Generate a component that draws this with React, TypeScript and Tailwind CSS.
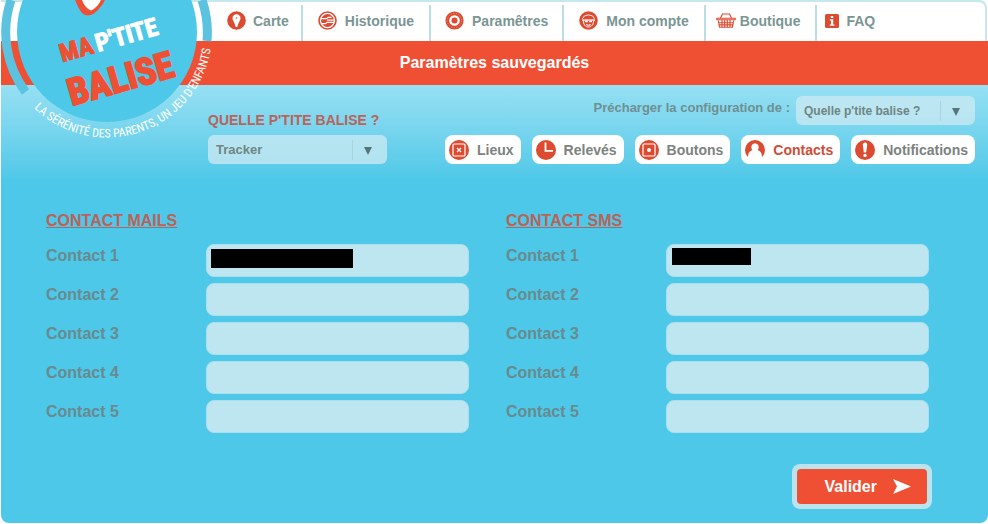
import { useState } from 'react'

const NAV_ITEMS = [
    {key:"Carte", icon:"pin", box:"pl-[15px] pr-3 gap-[7px]"},
    {key:"Historique", icon:"history", box:"px-[15px] gap-2"},
    {key:"Paramêtres", icon:"gear", box:"px-[14px] gap-2"},
    {key:"Mon compte", icon:"face", box:"px-[15px] gap-2"},
    {key:"Boutique", icon:"basket", box:"pl-[10px] pr-[15px] gap-1"},
    {key:"FAQ", icon:"info", box:"pl-2 pr-[15px] gap-[7px]"},
]
const TABS = [
    {key:"Lieux", icon:"place"},
    {key:"Relevés", icon:"clock"},
    {key:"Boutons", icon:"button"},
    {key:"Contacts", icon:"person"},
    {key:"Notifications", icon:"alert"},
]
const ROWS = [1,2,3,4,5]

const Icon = ({name}:any)=>{
    const red = "#dc4a30"
    if (name == "pin") return (
        <svg className="w-[19px] h-[19px]" viewBox="0 0 19 19">
            <circle cx="9.5" cy="9.5" r="9.3" fill={red} />
            <path d="M9.5 3.3c-2.3 0-4 1.7-4 3.9 0 2.2 1.9 3.3 3.2 8.8h1.6c1.3-5.5 3.2-6.6 3.2-8.8 0-2.2-1.7-3.9-4-3.9z" fill="#fff" />
            <circle cx="9.5" cy="7" r=".8" fill={red} />
        </svg>
    )
    if (name == "history") return (
        <svg className="w-[19px] h-[19px]" viewBox="0 0 19 19" fill="none">
            <circle cx="9.5" cy="9.5" r="8.5" stroke={red} strokeWidth="1.6" />
            <circle cx="9.5" cy="9.5" r="6.4" fill={red} />
            <path d="M3 7.6h5.5L10 6.4h3.5M3 12.6h4.5l1.5-1.2h7M9 9.2h7" stroke="#fff" strokeWidth="1.2" />
        </svg>
    )
    if (name == "gear") return (
        <svg className="w-[19px] h-[19px]" viewBox="0 0 19 19" fill="none">
            <circle cx="9.5" cy="9.5" r="7.2" stroke={red} strokeWidth="3.8" />
            <circle cx="9.5" cy="9.5" r="7.2" stroke="#f08a74" strokeWidth="1" strokeDasharray="1.2 1.5" />
            <circle cx="9.5" cy="9.5" r="3" fill={red} />
        </svg>
    )
    if (name == "face") return (
        <svg className="w-[19px] h-[19px]" viewBox="0 0 19 19" fill="none">
            <circle cx="9.5" cy="9.5" r="9.3" fill={red} />
            <path d="M3.4 7.8a6.3 5.2 0 0 1 12.2 0" stroke="#fff" strokeWidth=".9" />
            <path d="M3 9h13" stroke="#fff" strokeWidth="1.2" />
            <path d="M4.2 9c.3 4.8 2.3 7 5.3 7s5-2.2 5.3-7" stroke="#fff" strokeWidth="1" />
            <path d="M5.6 9.5h3.2v1.8H6.2zM10.200 9.500h3.200l-.6 1.800h-2.600z" fill="#fff" />
            <path d="M7.2 13.6q2.300 1.200 4.600 0" stroke="#fff" strokeWidth="1.1" />
        </svg>
    )
    if (name == "basket") return (
        <svg className="w-5 h-[15px]" viewBox="0 0 20 15" fill="none" stroke={red}>
            <path d="M4.5 5l2-4h7l2 4" strokeWidth="1.2" />
            <path d="M.8 5.2h18.4v1.6H.8z" strokeWidth="1.1" />
            <path d="M2.3 7.5l1.2 6.700h13l1.200-6.700M2.700 9.700h14.600M3 11.900h14M6 7v7M8.700 7v7M11.300 7v7M14 7v7" strokeWidth="1.1" />
        </svg>
    )
    if (name == "info") return (
        <svg className="w-[14px] h-[14px]" viewBox="0 0 14 14">
            <rect width="14" height="14" rx="1.5" fill={red} />
            <path d="M5.8 2h2.4v2H5.8zM4.8 5.2h3.4v5.3h1.2v1.3H4.8v-1.3H6v-4H4.8z" fill="#fff" />
        </svg>
    )
    if (name == "clock") return (
        <svg className="w-5 h-5" viewBox="0 0 20 20" fill="none">
            <circle cx="10" cy="10" r="10" fill={red} />
            <path d="M9.5 2.5v8.3H17" stroke="#fff" strokeWidth="1.8" />
        </svg>
    )
    if (name == "person") return (
        <svg className="w-5 h-5" viewBox="0 0 20 20">
            <circle cx="10" cy="10" r="10" fill={red} />
            <path d="M10 3.3a3.9 3.9 0 0 1 2.6 6.7c2.9.9 4.3 3 4.3 6v4H3.1v-4c0-3 1.4-5.1 4.3-6A3.9 3.9 0 0 1 10 3.3z" fill="#fff" />
        </svg>
    )
    if (name == "alert") return (
        <svg className="w-5 h-5" viewBox="0 0 20 20">
            <circle cx="10" cy="10" r="10" fill={red} />
            <path d="M7.8 4.5a2.2 2 0 0 1 4.4 0l-1 8H8.8z" fill="#fff" />
            <circle cx="10" cy="15.4" r="1.7" fill="#fff" />
        </svg>
    )
    return (
        <svg className="w-5 h-5" viewBox="0 0 20 20" fill="none">
            <circle cx="10" cy="10" r="10" fill={red} />
            <rect x="4" y="4" width="12" height="12" rx="1" stroke="#fff" strokeWidth="1.2" />
            {name == "place"
                ? <path d="M8 8l4 4M12 8l-4 4" stroke="#fff" strokeWidth="1.2" />
                : <circle cx="10" cy="10" r="2" fill="#fff" />
            }
        </svg>
    )
}

const Logo = ()=>(
    <svg className="absolute top-0 left-0 w-[216px] h-[142px]" viewBox="0 0 216 142" role="img" aria-label="Ma p'tite balise">
        <circle cx="107" cy="32" r="90" fill="#4dc8e8" />
        <path d="M25.5 92A100.5 100.5 0 0 1 11 0" fill="none" stroke="#5bc3e0" strokeWidth="9" />
        <path d="M202 0A100.5 100.5 0 0 1 207 41" fill="none" stroke="#5bc3e0" strokeWidth="9" />
        <path d="M75 0Q79 10 83 14Q88 17 94 13.5Q101 8 105 0z" fill="#ef5034" />
        <path d="M82 0Q85 8 91 10.5Q98 7 101 0z" fill="#fff" />
        <g fontFamily='"Roboto Condensed", "Liberation Sans Narrow", "DejaVu Sans Condensed", sans-serif' fontWeight="700" strokeLinejoin="round">
            <g transform="rotate(-16 63 61)" fontSize="25" strokeWidth="1">
                <text x="62" y="62" fill="#ef5034" stroke="#ef5034">MA</text>
                <text x="99" y="62" fill="#fff" stroke="#fff">P'TITE</text>
            </g>
            <text transform="rotate(-16 75 106)" x="72" y="105" fontSize="37" fill="#ef5034" stroke="#ef5034" strokeWidth="2">BALISE</text>
        </g>
        <path id="motto" d="M34 108A105 105 0 0 0 212 32" fill="none" />
        <text fontSize="12" fill="#fff" fontFamily='"Roboto Condensed", "Liberation Sans Narrow", "Liberation Sans", sans-serif'>
            <textPath href="#motto">LA SÉRÉNITÉ DES PARENTS, UN JEU D'ENFANTS</textPath>
        </text>
    </svg>
)

const BaliseSelect = ({id, options, textSize}:any)=>(
    <div className="relative w-[179px]">
        <select id={id} className={"block w-full h-[29px] appearance-none rounded-md bg-[#c8e8f2]/80 pl-2 pr-9 font-bold text-[#6f8583] " + textSize}>
            {options.map((x)=><option key={x}>{x}</option>)}
        </select>
        <span className="pointer-events-none absolute right-[34px] top-[5px] h-5 border-l border-[#a9d5e2]"></span>
        <svg className="pointer-events-none absolute right-[15px] top-3 w-2 h-2" viewBox="0 0 8 8"><path d="M0 0h8L4 8z" fill="#57767c" /></svg>
    </div>
)

const ContactList = ({title, name, type, hidden}:any)=>(
    <section className="flex-1">
        <h2 className="mb-[11px] text-base leading-6 font-bold text-[#ba6359] underline">{title}</h2>
        <div className="flex flex-col gap-[6px]">
            {ROWS.map((n)=>(
                <div key={n} className="flex">
                    <label htmlFor={name + n} className="w-40 shrink-0 text-base leading-6 font-bold text-[#698a8e]">Contact {n}</label>
                    <div className="relative flex-1">
                        <input id={name + n} type={type} className="block w-full h-[33px] rounded-lg border border-[#a9dfee] bg-[#bee6f1] px-2" />
                        {n == 1 && <span className={"absolute bg-black " + hidden}></span>}
                    </div>
                </div>
            ))}
        </div>
    </section>
)

const App = ()=>{
    const [tab, s__tab] = useState("Contacts")

    return (
    <div className="relative bg-white pl-px font-['Liberation_Sans',Arial,sans-serif]">
        <nav className="mr-px flex h-[41px] rounded-tr-lg border-t-2 border-r-2 border-[#c5e7ee] pl-[211px] pt-[3px]">
            {NAV_ITEMS.map((x,index)=>(
                <a key={x.key} href="#" className={"flex items-center pb-[5px] text-sm font-bold text-[#7b9593] " + x.box + (index > 0 ? " border-l-2 border-[#b9dee6]" : "")}>
                    <Icon name={x.icon} />{x.key}
                </a>
            ))}
        </nav>
        <div className="h-11 bg-[#ef5034] text-center text-base leading-[44px] font-bold text-white">Paramètres sauvegardés</div>
        <main className="rounded-b-lg bg-[#4dc8e8] bg-linear-to-b from-[#96e0f3] to-[#4dc8e8] to-[96px] pb-[14px]">
            <div className="flex justify-between pl-[207px] pr-[13px] pt-[11px]">
                <div className="pt-[14px]">
                    <label htmlFor="balise" className="mb-[5px] block text-sm leading-5 font-bold text-[#ba6359]">QUELLE P'TITE BALISE ?</label>
                    <BaliseSelect id="balise" options={["Tracker"]} textSize="text-[13px]" />
                </div>
                <div className="flex flex-col items-end gap-[10px]">
                    <div className="flex gap-[6px]">
                        <label htmlFor="preload" className="text-[13px] leading-6 font-bold text-[#6f8f93]">Précharger la configuration de :</label>
                        <BaliseSelect id="preload" options={["Quelle p'tite balise ?"]} textSize="text-xs" />
                    </div>
                    <div className="flex gap-[11px]">
                        {TABS.map((x)=>(
                            <button key={x.key} type="button" onClick={()=>s__tab(x.key)} className={"flex h-[29px] items-center gap-2 rounded-lg bg-white pl-1 pr-[7px] text-sm font-bold " + (tab == x.key ? "text-[#cf4c36]" : "text-[#7d8280]")}>
                                <Icon name={x.icon} />{x.key}
                            </button>
                        ))}
                    </div>
                </div>
            </div>
            <form className="pl-[45px] pr-14 pt-[45px]" onSubmit={(e)=>e.preventDefault()}>
                <div className="flex gap-[37px] pr-[3px]">
                    <ContactList title="CONTACT MAILS" name="mail" type="email" hidden="left-[5px] top-[5px] h-[19px] w-[142px]" />
                    <ContactList title="CONTACT SMS" name="sms" type="tel" hidden="left-[6px] top-1 h-[17px] w-[79px]" />
                </div>
                <div className="mt-[31px] flex justify-end">
                    <button className="w-[140px] rounded-lg bg-[#bbe3ee] p-[5px] text-base font-bold text-white">
                        <span className="flex h-[35px] items-center justify-end gap-4 rounded-sm bg-[#ef5034] pr-4">
                            Valider
                            <svg className="w-[18px] h-[15px]" viewBox="0 0 18 15"><path d="M0 0l18 7.5L0 15l4-7.5z" fill="#fff" /></svg>
                        </span>
                    </button>
                </div>
            </form>
        </main>
        <Logo />
    </div>
    );
}

export default App
